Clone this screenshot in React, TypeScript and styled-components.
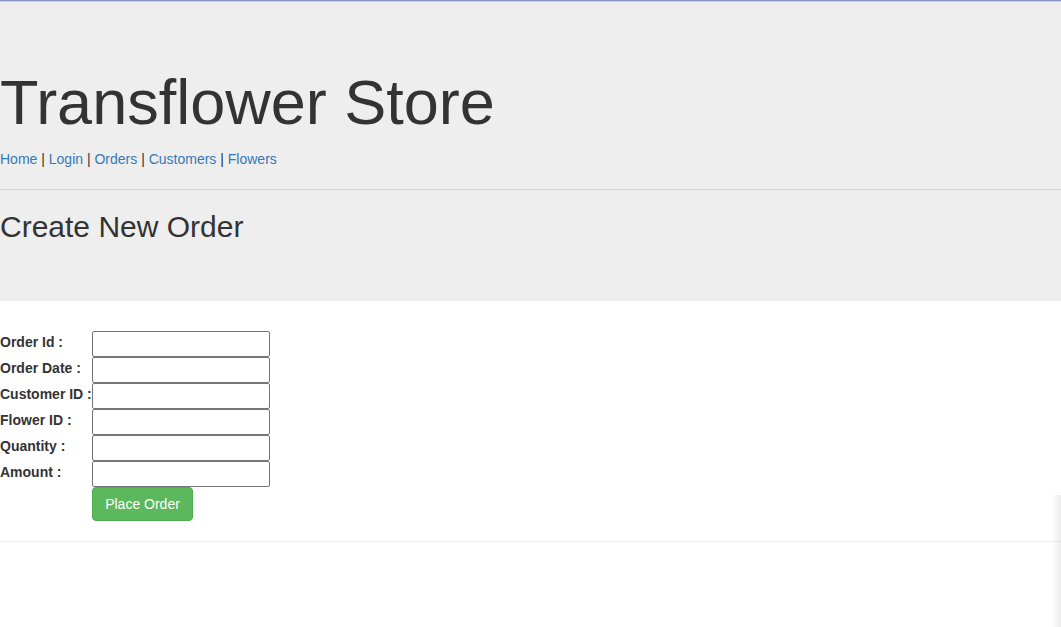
import styled, { createGlobalStyle } from 'styled-components';

const GlobalStyle = createGlobalStyle`
  html, body {
    margin: 0;
    padding: 0;
    background: #fff;
  }
  body {
    font-family: "Liberation Sans", Arial, sans-serif;
    font-size: 14px;
    line-height: 1.42857;
    color: #333;
    border-top: 1px solid #8a93c6;
    box-shadow: inset 0 1px 0 #c9cde6;
  }
`;

const fields = ['Order Id :', 'Order Date :', 'Customer ID :', 'Flower ID :', 'Quantity :', 'Amount :'];
const links = ['Home', 'Login', 'Orders', 'Customers', 'Flowers'];

export default function App() {
  return (
    <>
      <GlobalStyle />
      <Jumbotron>
        <Title>Transflower Store</Title>
        <Nav>
          {links.map((l, i) => (
            <span key={l}>
              {i > 0 && ' | '}
              <NavLink href="#">{l}</NavLink>
            </span>
          ))}
        </Nav>
        <Divider />
        <SubTitle>Create New Order</SubTitle>
      </Jumbotron>
      <Form onSubmit={(e) => e.preventDefault()}>
        {fields.map((f) => (
          <Row key={f}>
            <Label>{f}</Label>
            <Input type="text" />
          </Row>
        ))}
        <Row>
          <span />
          <div>
            <Button type="submit">Place Order</Button>
          </div>
        </Row>
      </Form>
      <Footer />
      <EdgeShadow />
    </>
  );
}

const Jumbotron = styled.div`
  background: #eee;
  padding: 66px 0 58px;
  margin-top: 1px;
`;

const Title = styled.h1`
  font-size: 63px;
  line-height: 1.1;
  font-weight: 500;
  margin: 0 0 12px;
`;

const Nav = styled.div`
  font-size: 14px;
  line-height: 20px;
`;

const NavLink = styled.a`
  color: #337ab7;
  text-decoration: none;
`;

const Divider = styled.hr`
  border: 0;
  border-top: 1px solid #d2d2d2;
  margin: 20px 0 20px;
`;

const SubTitle = styled.h2`
  font-size: 30px;
  line-height: 1.1;
  font-weight: 500;
  margin: 0;
`;

const Form = styled.form`
  display: grid;
  grid-template-columns: 92px 178px;
  align-items: start;
  margin-top: 30px;
`;

const Row = styled.div`
  display: contents;
`;

const Label = styled.label`
  font-weight: bold;
  font-size: 14px;
  line-height: 20px;
  padding-top: 1px;
  white-space: nowrap;
`;

const Input = styled.input`
  box-sizing: border-box;
  width: 178px;
  height: 26px;
  margin: 0;
  border: 1px solid #767676;
  border-radius: 2px;
  padding: 1px 2px;
  font-family: inherit;
  font-size: 14px;
  background: #fff;
`;

const Button = styled.button`
  box-sizing: border-box;
  height: 34px;
  width: 101px;
  padding: 6px 12px;
  font-family: inherit;
  font-size: 14px;
  line-height: 20px;
  color: #fff;
  background: #5cb85c;
  border: 1px solid #4cae4c;
  border-radius: 4px;
  cursor: pointer;
`;

const Footer = styled.hr`
  border: 0;
  border-top: 1px solid #eee;
  margin: 20px 0;
`;

const EdgeShadow = styled.div`
  position: fixed;
  right: 0;
  top: 495px;
  bottom: 0;
  width: 10px;
  background: linear-gradient(to right, rgba(0, 0, 0, 0), rgba(0, 0, 0, 0.07));
  pointer-events: none;
`;
